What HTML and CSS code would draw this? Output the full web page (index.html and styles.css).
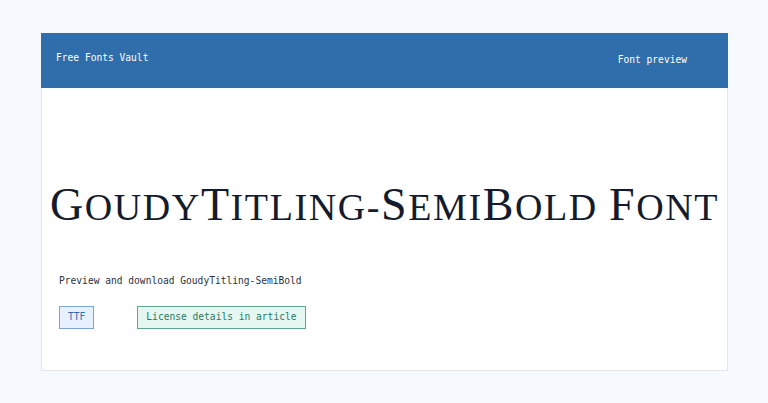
FILE: index.html
```html
<!DOCTYPE html>
<html lang="en">
<head>
    <meta charset="UTF-8">
    <meta name="viewport" content="width=device-width, initial-scale=1.0">
    <title>GoudyTitling-SemiBold Font - Free Fonts Vault</title>
    <link rel="stylesheet" href="styles.css">
</head>
<body>
    <div class="card">
        <div class="topbar">
            <div class="brand">Free Fonts Vault</div>
            <div class="nav">Font preview</div>
        </div>

        <div class="content">
            <!-- titling face: full caps for capitals, smaller caps for the rest -->
            <h1 class="specimen"><span class="cap">G</span>oudy<span class="cap">T</span>itling-<span class="cap">S</span>emi<span class="cap">B</span>old <span class="cap">F</span>ont</h1>
            <p class="lead">Preview and download GoudyTitling-SemiBold</p>
            <div class="tags">
                <span class="tag tag-format">TTF</span>
                <span class="tag tag-license">License details in article</span>
            </div>
        </div>
    </div>
</body>
</html>
```

FILE: styles.css
```css
* { margin: 0; padding: 0; box-sizing: border-box; }
body {
    font-family: 'DejaVu Sans Mono', 'Liberation Mono', monospace;
    font-size: 9.6px;
    background: #f6f9fe;
    padding: 33px 40px 0 41px;
}
.card {
    background: white;
    border: 1px solid #e2e7ef;
    border-top: none;
    height: 338px;
}
.topbar {
    background: #2f6dab;
    color: #ffffff;
    height: 55px;
    margin: 0 -1px;
    display: flex;
    justify-content: space-between;
    padding: 0 41px 0 15px;
}
.brand {
    padding-top: 19px;
}
.nav {
    padding-top: 21px;
}
.content {
    padding: 0 16px;
}
.specimen {
    font-family: 'Liberation Serif', 'DejaVu Serif', serif;
    font-weight: normal;
    font-size: 38px;
    text-transform: uppercase;
    letter-spacing: 1.6px;
    color: #131b2c;
    text-align: center;
    white-space: nowrap;
    margin: 94px -16px 0;
    line-height: 46px;
}
.specimen .cap {
    font-size: 46px;
}
.lead {
    color: #2a3344;
    margin-top: 45px;
    padding-left: 1px;
}
.tags {
    display: flex;
    gap: 43px;
    margin-top: 20px;
    padding-left: 1px;
}
.tag {
    display: inline-block;
    padding: 5px 8px 6px;
    border: 1px solid;
    line-height: 10px;
}
.tag-format {
    background: #e6f0ff;
    border-color: #7ea4d4;
    color: #2f6dab;
}
.tag-license {
    background: #e6f7f2;
    border-color: #5ea796;
    color: #1f7a66;
}
```
